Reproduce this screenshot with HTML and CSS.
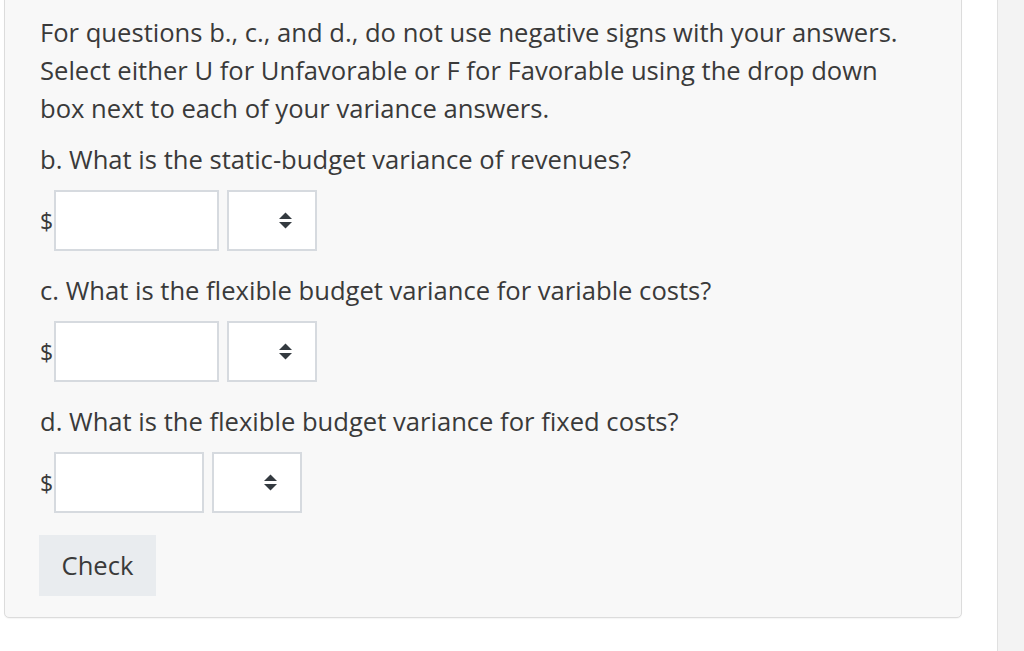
FILE: index.html
```html
<!DOCTYPE html>
<html>
<head>
<meta charset="utf-8">
<link rel="stylesheet" href="styles.css">
</head>
<body>
<div class="page">
  <div class="content">
    <div class="card">
      <p class="intro">For questions b., c., and d., do not use negative signs with your answers. Select either U for Unfavorable or F for Favorable using the drop down box next to each of your variance answers.</p>
      <p class="q">b. What is the static-budget variance of revenues?</p>
      <div class="row">
        <span class="cur">$</span>
        <span class="input"></span>
        <span class="select"><svg width="13" height="17" viewBox="0 0 13 17"><polygon points="0,7 6.5,0.5 13,7" fill="#343a40"/><polygon points="0,10 13,10 6.5,16.5" fill="#343a40"/></svg></span>
      </div>
      <p class="q">c. What is the flexible budget variance for variable costs?</p>
      <div class="row">
        <span class="cur">$</span>
        <span class="input"></span>
        <span class="select"><svg width="13" height="17" viewBox="0 0 13 17"><polygon points="0,7 6.5,0.5 13,7" fill="#343a40"/><polygon points="0,10 13,10 6.5,16.5" fill="#343a40"/></svg></span>
      </div>
      <p class="q">d. What is the flexible budget variance for fixed costs?</p>
      <div class="row">
        <span class="cur">$</span>
        <span class="input narrow"></span>
        <span class="select"><svg width="13" height="17" viewBox="0 0 13 17"><polygon points="0,7 6.5,0.5 13,7" fill="#343a40"/><polygon points="0,10 13,10 6.5,16.5" fill="#343a40"/></svg></span>
      </div>
      <button class="check">Check</button>
    </div>
  </div>
  <div class="aside"></div>
</div>
</body>
</html>
```
FILE: styles.css
```css
html, body {
  margin: 0;
  padding: 0;
  background: #ffffff;
}
body {
  font-family: "Open Sans", "Liberation Sans", sans-serif;
  color: #3a3a3a;
}
.page {
  display: flex;
  height: 651px;
  overflow: hidden;
}
.content {
  flex: 1;
  padding: 0 35px 0 4px;
}
.card {
  margin-top: -10px;
  background: #f8f8f8;
  border: 1px solid #dcdcdc;
  border-radius: 5px;
  padding: 23px 35px 21px 35px;
  box-shadow: 0 1px 1px rgba(0,0,0,0.04);
}
p {
  margin: 0;
  font-size: 25.6px;
  line-height: 38px;
}
.intro {
  margin-bottom: 13px;
}
.row {
  display: flex;
  align-items: center;
  margin: 11px 0 21px;
}
.cur {
  font-size: 23px;
  width: 14px;
}
.input {
  box-sizing: border-box;
  width: 165px;
  height: 61px;
  background: #fff;
  border: 2px solid #d6dadf;
}
.input.narrow {
  width: 150px;
}
.select {
  box-sizing: border-box;
  width: 90px;
  height: 61px;
  margin-left: 8px;
  background: #fff;
  border: 2px solid #d6dadf;
  display: flex;
  align-items: center;
  justify-content: flex-end;
  padding-right: 23px;
}
.select svg {
  display: block;
}
.check {
  display: block;
  margin: 22px 0 0 -1px;
  width: 117px;
  height: 61px;
  border: none;
  background: #e9ecef;
  color: #3a3a3a;
  font-family: "Open Sans", "Liberation Sans", sans-serif;
  font-size: 25.6px;
  padding: 0;
}
.aside {
  width: 26px;
  border-left: 1px solid #e0e0e0;
  background: #f3f3f3;
}
```
